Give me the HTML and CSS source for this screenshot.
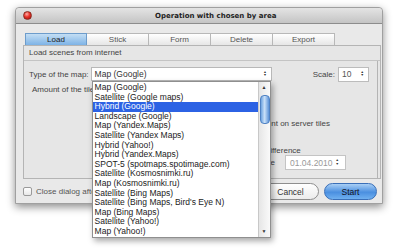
FILE: index.html
```html
<!DOCTYPE html>
<html lang="en">
<head>
  <meta charset="UTF-8">
  <title>Operation with chosen by area</title>
  <link rel="stylesheet" href="styles.css">
</head>
<body>
  <div class="window">
    <div class="titlebar">
      <span class="close-btn"></span>
      <span class="title">Operation with chosen by area</span>
    </div>
    <div class="content">
      <div class="tabs">
        <div class="tab active">Load</div>
        <div class="tab">Stick</div>
        <div class="tab">Form</div>
        <div class="tab">Delete</div>
        <div class="tab">Export</div>
      </div>
      <div class="panel">
        <div class="panel-head">Load scenes from internet</div>
        <div class="group">
          <div class="row-map">
            <span class="label">Type of the map:</span>
            <div class="select">
              <span>Map (Google)</span>
              <span class="updown">&#9650;<br>&#9660;</span>
              <ul class="dropdown">
                <li>Map (Google)</li>
                <li>Satellite (Google maps)</li>
                <li class="selected">Hybrid (Google)</li>
                <li>Landscape (Google)</li>
                <li>Map (Yandex.Maps)</li>
                <li>Satellite (Yandex Maps)</li>
                <li>Hybrid (Yahoo!)</li>
                <li>Hybrid (Yandex.Maps)</li>
                <li>SPOT-5 (spotmaps.spotimage.com)</li>
                <li>Satellite (Kosmosnimki.ru)</li>
                <li>Map (Kosmosnimki.ru)</li>
                <li>Satellite (Bing Maps)</li>
                <li>Satellite (Bing Maps, Bird's Eye N)</li>
                <li>Map (Bing Maps)</li>
                <li>Satellite (Yahoo!)</li>
                <li>Map (Yahoo!)</li>
                <div class="scrollbar">
                  <span class="arrow">&#9650;</span>
                  <span class="thumb"></span>
                  <span class="arrow down">&#9660;</span>
                </div>
              </ul>
            </div>
            <span class="label scale-label">Scale:</span>
            <div class="spin">
              <span>10</span>
              <span class="updown">&#9650;<br>&#9660;</span>
            </div>
          </div>
          <div class="row-amount">Amount of the tiles: 0</div>
          <div class="row-absent">Load only absent on server tiles</div>
          <div class="row-diff">Replace with date difference</div>
          <div class="row-date">
            <span class="date-label">Date before</span>
            <div class="date-box">
              <span>01.04.2010</span>
              <span class="updown">&#9650;<br>&#9660;</span>
            </div>
          </div>
        </div>
      </div>
      <div class="bottom">
        <label class="check"><span class="box"></span>Close dialog after finishing</label>
        <button class="btn cancel">Cancel</button>
        <button class="btn start">Start</button>
      </div>
    </div>
  </div>
</body>
</html>
```

FILE: styles.css
```css
html {
  height: 100%;
}

body {
  margin: 0;
  min-height: 251px;
  height: 100%;
  background: #fff;
  font-family: "Liberation Sans", Arial, sans-serif;
  font-size: 8px;
  color: #333;
}

.window {
  margin: 7px 0 0 15px;
  width: 368px;
  height: 197px;
  background: #e9e9e9;
  border: 1px solid #a0a0a0;
  border-radius: 4px 4px 0 0;
  box-sizing: border-box;
  box-shadow: 0 3px 9px rgba(0, 0, 0, 0.45);
}

.titlebar {
  height: 15px;
  display: flex;
  align-items: center;
  background: linear-gradient(#e4e4e4, #c4c4c4);
  border-bottom: 1px solid #8c8c8c;
  border-radius: 4px 4px 0 0;
}

.close-btn {
  width: 9px;
  height: 9px;
  margin-left: 7px;
  border-radius: 50%;
  background: radial-gradient(circle at 40% 30%, #ffb0a8 0, #e8322a 45%, #9b0c08 100%);
  border: 1px solid #8a2a20;
  box-sizing: border-box;
}

.title {
  margin-left: 123px;
  font-family: "DejaVu Sans", sans-serif;
  font-weight: bold;
  font-size: 7px;
  color: #222;
}

.content {
  padding: 9px 0 0 7px;
}

.tabs {
  display: flex;
  margin-left: 2px;
}

.tab {
  width: 62px;
  height: 12px;
  line-height: 12px;
  text-align: center;
  color: #555;
  background: linear-gradient(#ffffff, #e6e6e6);
  border: 1px solid #b8b8b8;
  border-left: none;
  border-bottom: none;
  box-sizing: border-box;
}

.tab:first-child {
  border-left: 1px solid #b8b8b8;
}

.tab.active {
  background: linear-gradient(#c4def4, #7db3e6);
  border-color: #6d9ccb;
  color: #222;
}

.panel {
  width: 358px;
  height: 134px;
  border: 1px solid #b4b4b4;
  box-sizing: border-box;
  background: #e6e6e6;
}

.panel-head {
  height: 14px;
  line-height: 13px;
  padding-left: 5px;
  color: #444;
  border-bottom: 1px solid #c4c4c4;
}

.group {
  width: 354px;
  height: 118px;
  border-right: 1px solid #b4b4b4;
  border-bottom: 1px solid #b4b4b4;
  box-sizing: border-box;
  padding: 6px 0 0 5px;
}

.row-map {
  display: flex;
  align-items: center;
  height: 14px;
}

.label {
  color: #444;
}

.select {
  position: relative;
  margin-left: 2px;
  width: 181px;
  height: 14px;
  background: #fff;
  border: 1px solid #b8b8b8;
  box-sizing: border-box;
  display: flex;
  align-items: center;
  justify-content: space-between;
  padding: 0 4px 0 3px;
  font-size: 8.5px;
}

.updown {
  font-size: 3.5px;
  line-height: 3.5px;
  color: #333;
  text-align: center;
}

.dropdown {
  position: absolute;
  top: 13px;
  left: 0;
  width: 179px;
  height: 157px;
  margin: 0;
  padding: 1px 12px 0 0;
  list-style: none;
  background: #fff;
  border: 1px solid #8f8f8f;
  box-sizing: border-box;
  box-shadow: 2px 3px 6px rgba(0, 0, 0, 0.35);
  z-index: 5;
}

.dropdown li {
  height: 9.6px;
  line-height: 9.6px;
  padding-left: 2px;
  color: #222;
  white-space: nowrap;
  overflow: hidden;
}

.dropdown li.selected {
  background: #2c62e4;
  color: #fff;
}

.scrollbar {
  position: absolute;
  top: 0;
  right: 0;
  width: 12px;
  height: 100%;
  background: linear-gradient(90deg, #e6e6e6, #fafafa);
  border-left: 1px solid #c8c8c8;
  box-sizing: border-box;
}

.scrollbar .arrow {
  position: absolute;
  left: 3px;
  top: 2px;
  font-size: 5px;
  color: #333;
}

.scrollbar .arrow.down {
  top: auto;
  bottom: 3px;
}

.scrollbar .thumb {
  position: absolute;
  left: 1px;
  top: 13px;
  width: 8px;
  height: 27px;
  border-radius: 4px;
  background: linear-gradient(90deg, #6ea3e0, #c9e0f8 45%, #5d93d8);
  border: 1px solid #4f82c4;
}

.scale-label {
  margin-left: auto;
  margin-right: 3px;
}

.spin {
  width: 31px;
  height: 15px;
  margin-right: 8px;
  background: #fff;
  border: 1px solid #bcbcbc;
  box-sizing: border-box;
  display: flex;
  align-items: center;
  justify-content: space-between;
  padding: 0 4px 0 3px;
  font-size: 8.5px;
  color: #555;
}

.row-amount {
  margin: 4px 0 0 3px;
  color: #444;
}

.row-absent {
  margin-top: 25px;
  margin-left: 188px;
  color: #444;
}

.row-diff {
  margin-top: 18px;
  margin-left: 171px;
  color: #444;
}

.row-date {
  display: flex;
  align-items: center;
}

.date-label {
  width: 246px;
  text-align: right;
  color: #444;
}

.date-box {
  margin-left: 10px;
  width: 61px;
  height: 15px;
  background: #fff;
  border: 1px solid #c4c4c4;
  box-sizing: border-box;
  display: flex;
  align-items: center;
  justify-content: space-between;
  padding: 0 6px 0 4px;
  font-size: 8.5px;
  color: #999;
}

.bottom {
  display: flex;
  align-items: center;
  height: 17px;
  margin-top: 4px;
}

.check {
  display: flex;
  align-items: center;
  color: #555;
}

.box {
  width: 9px;
  height: 9px;
  margin-right: 4px;
  background: linear-gradient(#fff, #e8e8e8);
  border: 1px solid #9a9a9a;
  border-radius: 2px;
  box-sizing: border-box;
}

.btn {
  height: 17px;
  border-radius: 9px;
  font-family: "Liberation Sans", Arial, sans-serif;
  font-size: 8.5px;
  padding: 0;
}

.cancel {
  margin-left: auto;
  width: 57px;
  background: linear-gradient(#ffffff, #ececec);
  border: 1px solid #8e8e8e;
  color: #333;
}

.start {
  margin-left: 5px;
  margin-right: 5px;
  width: 53px;
  background: linear-gradient(#a9cff5, #4a8fe0 55%, #6fb0f0);
  border: 1px solid #3a6fb8;
  color: #112;
}
```
